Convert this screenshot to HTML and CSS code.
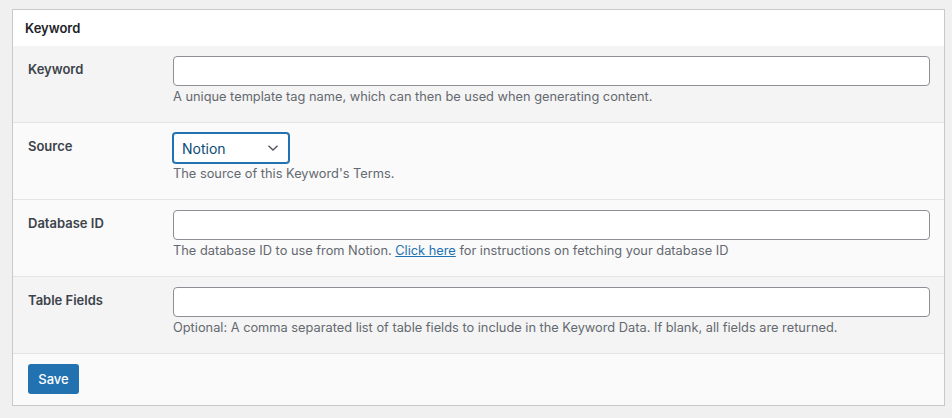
FILE: index.html
```html
<!DOCTYPE html>
<html>
<head>
<meta charset="utf-8">
<link rel="stylesheet" href="styles.css">
</head>
<body>
<div class="panel">
  <div class="panel-header">Keyword</div>
  <div class="row row-gray">
    <div class="label">Keyword</div>
    <div class="field">
      <input class="text-input" type="text">
      <p class="desc">A unique template tag name, which can then be used when generating content.</p>
    </div>
  </div>
  <div class="row row-light">
    <div class="label">Source</div>
    <div class="field">
      <div class="select">
        <span>Notion</span>
        <svg class="chev" width="12" height="8" viewBox="0 0 12 8"><path d="M1.5 1.8 L6 6 L10.5 1.8" fill="none" stroke="#50575e" stroke-width="1.4"/></svg>
      </div>
      <p class="desc">The source of this Keyword's Terms.</p>
    </div>
  </div>
  <div class="row row-light">
    <div class="label">Database ID</div>
    <div class="field">
      <input class="text-input" type="text">
      <p class="desc">The database ID to use from Notion. <a href="#">Click here</a> for instructions on fetching your database ID</p>
    </div>
  </div>
  <div class="row row-gray">
    <div class="label">Table Fields</div>
    <div class="field">
      <input class="text-input" type="text">
      <p class="desc">Optional: A comma separated list of table fields to include in the Keyword Data. If blank, all fields are returned.</p>
    </div>
  </div>
  <div class="footer">
    <button class="btn">Save</button>
  </div>
</div>
</body>
</html>
```
FILE: styles.css
```css
html, body {
  margin: 0;
  background: #f0f0f1;
}
body {
  padding: 9px 7px 0 12px;
  font-family: Inter, "Noto Sans", sans-serif;
  color: #3c434a;
  font-size: 13px;
}
.panel {
  border: 1px solid #c8c9cc;
  background: #fff;
}
.panel-header {
  height: 36px;
  line-height: 36px;
  padding-left: 12px;
  font-size: 13px;
  font-weight: 600;
  color: #1d2327;
  background: #fff;
}
.row {
  display: flex;
  height: 77px;
  box-sizing: border-box;
  border-bottom: 1px solid #e2e3e4;
}
.row-gray { background: #f4f4f4; }
.row-light { background: #fafafa; }
.label {
  width: 145px;
  padding-left: 15px;
  padding-top: 14px;
  font-weight: 600;
  font-size: 13px;
  color: #3c434a;
  line-height: 18px;
}
.field {
  flex: 1;
  padding-top: 10px;
  padding-right: 14px;
}
.text-input {
  display: block;
  width: 100%;
  box-sizing: border-box;
  height: 30px;
  border: 1px solid #8c8f94;
  border-radius: 4px;
  background: #fff;
  margin: 0;
}
.desc {
  margin: 2px 0 0;
  line-height: 18px;
  font-size: 12.8px;
  color: #646970;
}
.desc a {
  color: #2271b1;
  text-decoration: underline;
}
.select {
  width: 116px;
  height: 30px;
  box-sizing: border-box;
  border: 1px solid #2271b1;
  box-shadow: 0 0 0 1px #2271b1;
  border-radius: 3px;
  background: #fff;
  display: flex;
  align-items: center;
  justify-content: space-between;
  padding: 0 9px 0 8px;
  color: #0a4b78;
  font-size: 14px;
}
.chev { display: block; }
.footer {
  height: 51px;
  background: #fafafa;
  padding: 10px 0 0 15px;
  box-sizing: border-box;
}
.btn {
  width: 51px;
  height: 30px;
  border: 0;
  border-radius: 3px;
  background: #2271b1;
  color: #fff;
  font-family: inherit;
  font-size: 13px;
  font-weight: 500;
  padding: 0;
}
```
